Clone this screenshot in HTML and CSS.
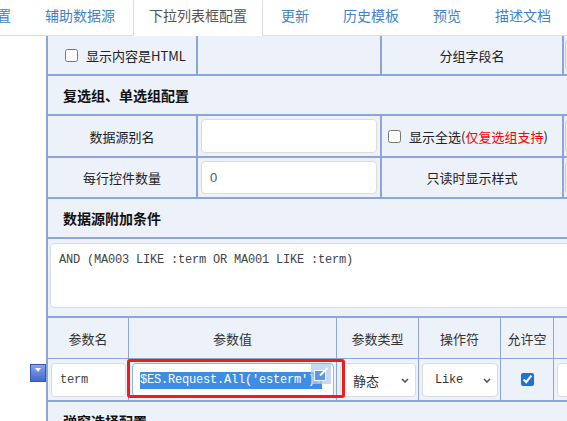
FILE: index.html
```html
<!DOCTYPE html>
<html lang="zh-CN">
<head>
<meta charset="utf-8">
<title>下拉列表框配置</title>
<link rel="stylesheet" href="styles.css">
</head>
<body>
<ul class="tabs">
  <li><a>基础配置</a></li>
  <li><a>辅助数据源</a></li>
  <li class="active"><a>下拉列表框配置</a></li>
  <li><a>更新</a></li>
  <li><a>历史模板</a></li>
  <li><a>预览</a></li>
  <li><a>描述文档</a></li>
</ul>
<div class="sheet">
  <label class="cell chk"><input type="checkbox" class="cb"><span>显示内容是HTML</span></label>
  <div class="cell"></div>
  <div class="cell center">分组字段名</div>
  <div class="cell edge"><div class="inp gray"></div></div>

  <div class="cell span section">复选组、单选组配置</div>

  <div class="cell center">数据源别名</div>
  <div class="cell field"><div class="inp"></div></div>
  <label class="cell chk chk-s"><input type="checkbox" class="cb"><span>显示全选(<em class="red">仅复选组支持</em>)</span></label>
  <div class="cell edge"><div class="inp gray"></div></div>

  <div class="cell center">每行控件数量</div>
  <div class="cell field"><div class="inp num">0</div></div>
  <div class="cell center">只读时显示样式</div>
  <div class="cell edge"><div class="inp gray"></div></div>

  <div class="cell span section">数据源附加条件</div>

  <div class="cell span area-cell"><textarea class="area" readonly>AND (MA003 LIKE :term OR MA001 LIKE :term)</textarea></div>

  <div class="params">
    <div class="pc center">参数名</div>
    <div class="pc center">参数值</div>
    <div class="pc center">参数类型</div>
    <div class="pc center">操作符</div>
    <div class="pc center">允许空</div>
    <div class="pc"></div>

    <div class="pc pd"><div class="inp mono">term</div></div>
    <div class="pc pd"><div class="inp mono focus"><span class="sel-text">$ES.Request.All('esterm').</span><svg class="edit-ico" width="20" height="20" viewBox="0 0 20 20"><rect width="20" height="20" fill="#b4cbeb" opacity=".75"/><rect x="3.5" y="6.5" width="11" height="10" fill="#5b97e2" stroke="#eef4fc" stroke-width="1"/><path d="M9 11.5l7.5-7.5" stroke="#fff" stroke-width="2"/></svg></div></div>
    <div class="pc pd"><div class="select"><span>静态</span><svg width="8" height="5" viewBox="0 0 8 5"><path d="M1 1l3 3 3-3" fill="none" stroke="#555" stroke-width="1.6"/></svg></div></div>
    <div class="pc pd"><div class="select mono"><span>Like</span><svg width="8" height="5" viewBox="0 0 8 5"><path d="M1 1l3 3 3-3" fill="none" stroke="#555" stroke-width="1.6"/></svg></div></div>
    <div class="pc center"><input type="checkbox" class="cb" checked></div>
    <div class="pc pd"><div class="inp"></div></div>

    <div class="mark"></div>
    <div class="row-btn"><i class="tri"></i></div>
  </div>

  <div class="cell span section">弹窗选择配置</div>
</div>
</body>
</html>
```
FILE: styles.css
```css
* { box-sizing: border-box; }
html, body { margin: 0; padding: 0; overflow: hidden; background: #fff; }
body {
  width: 567px; height: 421px;
  font-family: "Noto Sans CJK SC", "Noto Sans", sans-serif;
  font-size: 13px; color: #222;
}

.tabs {
  display: flex; list-style: none;
  margin: -2px 0 0 -61px; padding: 0;
  border-bottom: 1px solid #ddd; white-space: nowrap;
}
.tabs li { flex: none; margin: 0 2px -1px 0; }
.tabs a {
  display: block; padding: 6px 15px 10px; line-height: 20px;
  font-size: 14px; color: #4283c2;
  border: 1px solid transparent; border-radius: 4px 4px 0 0;
}
.tabs .active a { color: #555; background: #fff; border-color: #ddd #ddd #fff; }

.sheet {
  margin-left: 46px; width: max-content;
  display: grid;
  grid-template-columns: 148px 182px 180px 200px;
  grid-template-rows: 38px 38px 40px 39px 38px 77px 82px 38px;
  gap: 2px; padding-left: 2px;
  background: #8ba6d8;
}
.cell { background: #edf1fa; display: flex; align-items: center; min-width: 0; }
.center { justify-content: center; }
.span { grid-column: 1 / -1; }
.section { padding-left: 15px; font-size: 14px; font-weight: bold; color: #111; }
.chk { gap: 8px; padding-left: 17px; }
.chk-s { padding-left: 6px; }
.cb { margin: 0; width: 13px; height: 13px; flex: none; accent-color: #1d72dc; }
.red { font-style: normal; color: #f00; }

.field { align-items: stretch; padding: 3px; }
.edge { align-items: stretch; padding: 3px 3px 3px 1px; }
.inp {
  flex: 1; min-width: 0;
  border: 1px solid #dcdcdc; border-radius: 4px; background: #fff;
  padding: 0 8px; display: flex; align-items: center;
  font: 13px "Liberation Sans", sans-serif; color: #555;
}
.gray { background: #eee; border-color: #ccc; }

.area-cell { align-items: flex-start; padding: 4px 0 8px 2px; }
.area {
  display: block; width: 100%; height: 65px; margin: 0;
  border: 1px solid #dcdcdc; border-radius: 4px; background: #fff;
  padding: 7px 8px;
  font: 12px/18px "Liberation Mono", monospace; letter-spacing: -0.2px;
  color: #444; resize: none; outline: none; overflow: hidden;
}

.params {
  grid-column: 1 / -1; position: relative;
  display: grid;
  grid-template-columns: 80px 207px 81px 81px 52px 1fr;
  grid-template-rows: 40px 41px;
  gap: 1px; background: #8ba6d8;
}
.pc { background: #edf1fa; display: flex; align-items: center; min-width: 0; color: #333; }
.pd { align-items: stretch; padding: 4px 2px 3px 3px; }
.mono { font-family: "Liberation Mono", monospace; font-size: 12px; letter-spacing: -0.2px; color: #444; }

.focus { position: relative; border-color: #8fb9ea; padding-left: 7px; }
.sel-text { background: #3d8de6; color: #fff; line-height: 17px; white-space: pre; }
.edit-ico { position: absolute; top: 0; right: 2px; }

.select {
  flex: 1; display: flex; align-items: center; justify-content: space-between;
  border: 1px solid #dcdcdc; border-radius: 4px; background: #fff;
  padding: 0 6px 0 12px; color: #333;
}

.mark {
  position: absolute; left: 79px; top: 41px; width: 218px; height: 39px;
  border: 3px solid #f01c1c; border-radius: 3px;
}
.row-btn {
  position: absolute; left: -18px; top: 46px; width: 16px; height: 18px;
  border: 1px solid #3556b4;
  background: linear-gradient(#86a4ee, #4467cc);
  display: flex; justify-content: center; padding-top: 3px;
}
.tri {
  width: 0; height: 0;
  border-top: 4px solid #fff; border-left: 3px solid transparent; border-right: 3px solid transparent;
}
```
